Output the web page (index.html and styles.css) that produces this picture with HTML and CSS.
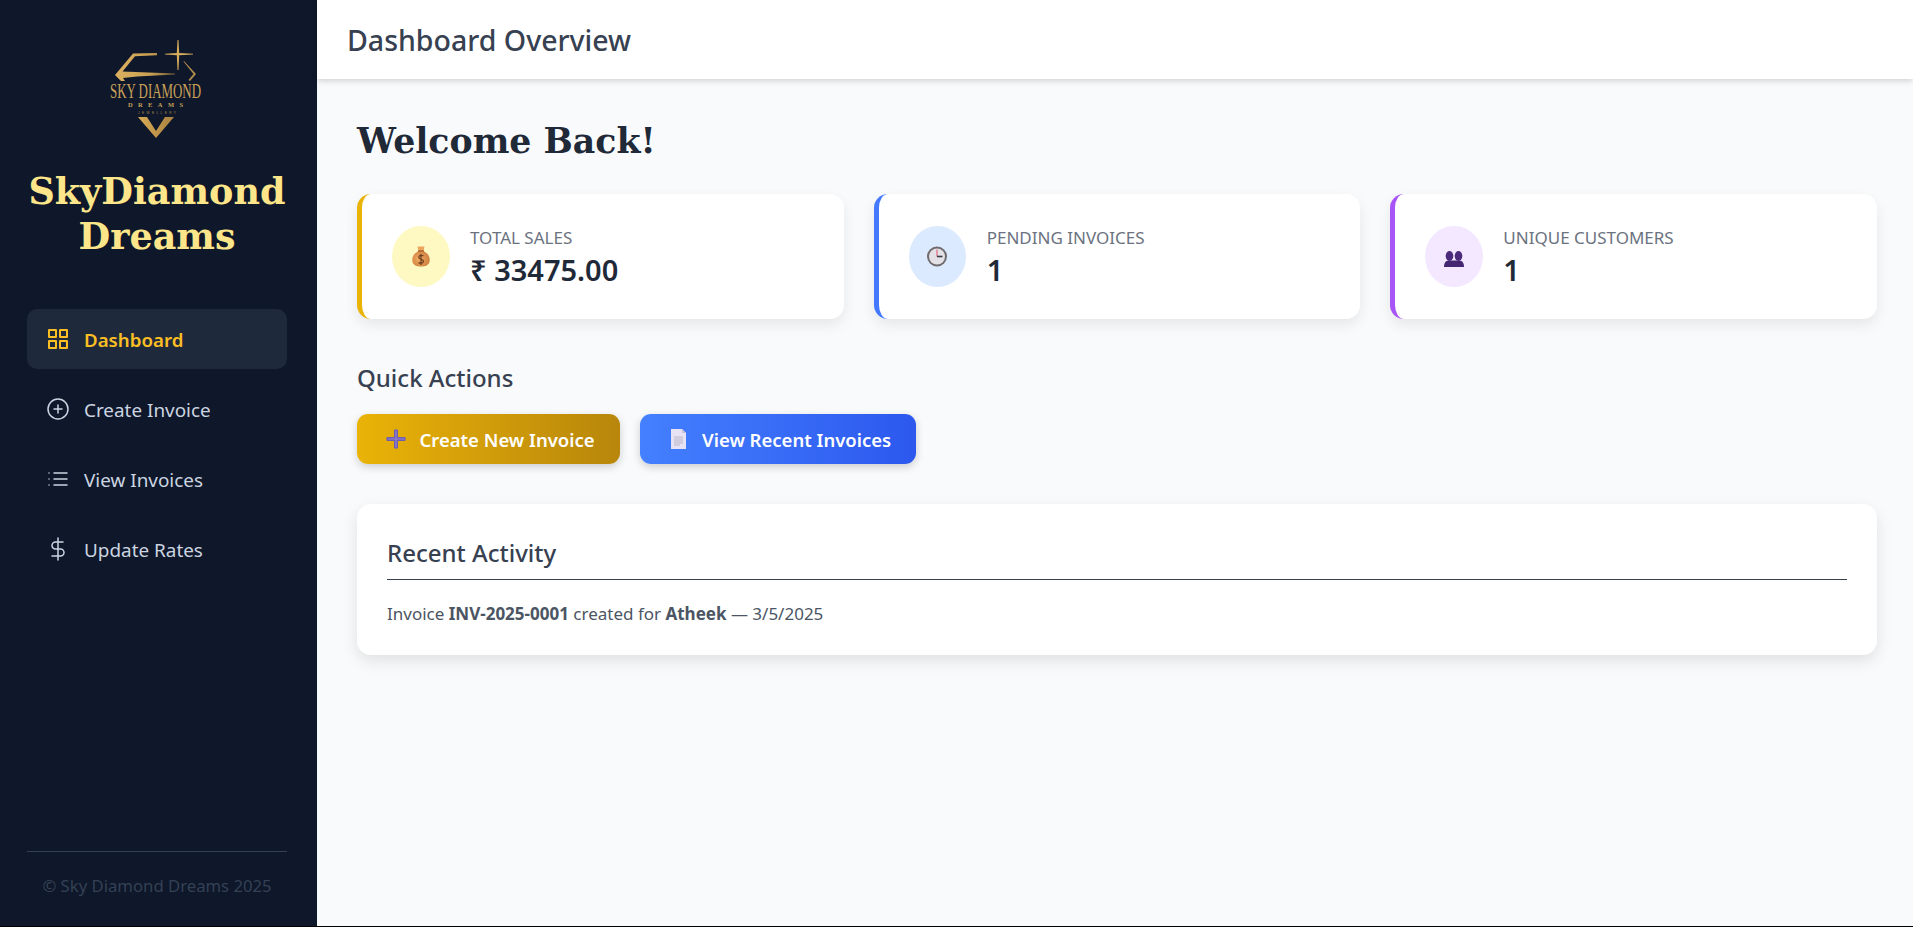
FILE: index.html
```html
<!DOCTYPE html>
<html lang="en">
<head>
<meta charset="utf-8">
<title>Dashboard Overview</title>
<link rel="stylesheet" href="styles.css">
</head>
<body>
<div class="app">
  <aside class="sidebar">
    <div class="brand">
      <svg class="logo" viewBox="0 0 100 100" width="100" height="100">
        <defs>
          <linearGradient id="g1" x1="0" x2="1" y1="0" y2="0"><stop offset="0" stop-color="#d8ab55"/><stop offset="1" stop-color="#a8813f"/></linearGradient>
          <linearGradient id="g2" x1="0" x2="1" y1="0" y2="0"><stop offset="0" stop-color="#dcb060"/><stop offset=".6" stop-color="#c9a052"/><stop offset="1" stop-color="#6f5a35"/></linearGradient>
        </defs>
        <path d="M8 35 L26 13.500 L50 13 L50 15.200 L28 16.200 L15.500 31.500 L68 33.400 L68 34.600 L30 36.500 L16 38 L18 41 L14 41Z" fill="url(#g2)"/>
        <path d="M70.500 0 H71.500 L72.200 13 L86 13.800 V14.400 L72.200 15.200 L71.500 30 H70.500 L69.800 15.200 L58 14.400 V13.800 L69.800 13Z" fill="#d5ab5c"/>
        <path d="M77 21 L89 34 L83 41 L81.500 40 L86.500 34 L76.500 21.500Z" fill="#b38e4c"/>
        <text class="logo-a" x="48.500" y="58" textLength="91" lengthAdjust="spacingAndGlyphs" text-anchor="middle">SKY DIAMOND</text>
        <text class="logo-b" x="48.500" y="67" textLength="55" text-anchor="middle">DREAMS</text>
        <text class="logo-c" x="50" y="74" textLength="38" text-anchor="middle">JEWELLERY</text>
        <path d="M31 77 L40 77 L49 91 L58 77 L67 77 L49 98Z" fill="url(#g1)"/>
      </svg>
      <h1 class="brand-name">SkyDiamond Dreams</h1>
    </div>
    <nav class="nav">
      <a class="nav-item active">
        <svg class="nav-icon" viewBox="0 0 24 24"><rect x="3" y="3" width="7" height="7"/><rect x="14" y="3" width="7" height="7"/><rect x="14" y="14" width="7" height="7"/><rect x="3" y="14" width="7" height="7"/></svg>
        <span>Dashboard</span>
      </a>
      <a class="nav-item">
        <svg class="nav-icon thin" viewBox="0 0 24 24"><circle cx="12" cy="12" r="10"/><path d="M12 8v8M8 12h8"/></svg>
        <span class="nav-label">Create Invoice</span>
      </a>
      <a class="nav-item">
        <svg class="nav-icon thin" viewBox="0 0 24 24"><path d="M8 6h13M8 12h13M8 18h13M3 6h.01M3 12h.01M3 18h.01"/></svg>
        <span class="nav-label">View Invoices</span>
      </a>
      <a class="nav-item">
        <svg class="nav-icon thin" viewBox="0 0 24 24"><path d="M12 1v22M17 5H9.500a3.500 3.500 0 0 0 0 7h5a3.500 3.500 0 0 1 0 7H6"/></svg>
        <span class="nav-label">Update Rates</span>
      </a>
    </nav>
    <footer class="side-foot">© Sky Diamond Dreams 2025</footer>
  </aside>
  <div class="content">
    <header class="topbar"><h2 class="topbar-title">Dashboard Overview</h2></header>
    <main class="main">
      <h2 class="welcome">Welcome Back!</h2>
      <section class="stats">
        <div class="stat stat-gold">
          <div class="stat-icon">
            <svg viewBox="0 0 18 21" width="18" height="21">
              <defs><radialGradient id="bag" cx=".4" cy=".5" r=".7"><stop offset="0" stop-color="#f0aa62"/><stop offset="1" stop-color="#c97a3a"/></radialGradient></defs>
              <path d="M5.500 0.500 L12.500 0.500 L11.500 5 L6.500 5Z" fill="#eda45c"/>
              <path d="M6.500 5 C2 7.500 0 10.500 0.300 14.500 C0.600 19.500 5 20.500 9 20.500 C13 20.500 17.400 19.500 17.700 14.500 C18 10.500 16 7.500 11.500 5Z" fill="url(#bag)"/>
              <rect x="6" y="4.300" width="6" height="1.300" fill="#a85f28"/>
              <path d="M11.500 9.800 C9.500 8.800 6.800 9.300 6.800 11.300 C6.800 13.800 11.500 12.800 11.500 15.300 C11.500 17.300 8.500 17.600 6.500 16.600 M9 8v11" fill="none" stroke="#6b3f22" stroke-width="1.200"/>
            </svg>
          </div>
          <div class="stat-body"><div class="stat-label">TOTAL SALES</div><div class="stat-value">₹ 33475.00</div></div>
        </div>
        <div class="stat stat-blue">
          <div class="stat-icon">
            <svg viewBox="0 0 20 21" width="20" height="21">
              <circle cx="10" cy="10.500" r="10" fill="#6f6b6e"/>
              <circle cx="10" cy="10.500" r="8" fill="#e3e1e6"/>
              <path d="M10 3.500v7" stroke="#e2506b" stroke-width="1"/>
              <path d="M10 10.500h5.500" stroke="#3a3a45" stroke-width="1.600"/>
            </svg>
          </div>
          <div class="stat-body"><div class="stat-label">PENDING INVOICES</div><div class="stat-value">1</div></div>
        </div>
        <div class="stat stat-purple">
          <div class="stat-icon">
            <svg class="people" viewBox="0 0 20 16" width="20" height="16">
              <ellipse cx="5.500" cy="5" rx="3.800" ry="5" fill="#4b2a7c"/>
              <ellipse cx="14.500" cy="5" rx="3.800" ry="5" fill="#4b2a7c"/>
              <path d="M0 16 C0 11.500 2 9.500 5 9.500 L15 9.500 C18 9.500 20 11.500 20 16Z" fill="#452672"/>
            </svg>
          </div>
          <div class="stat-body"><div class="stat-label">UNIQUE CUSTOMERS</div><div class="stat-value">1</div></div>
        </div>
      </section>
      <h3 class="section-title">Quick Actions</h3>
      <div class="actions">
        <a class="btn btn-gold">
          <span class="btn-icon"><svg viewBox="0 0 20 20" width="20" height="20"><path d="M8 1 Q10 -.5 12 1 V8 H19 Q20.500 10 19 12 H12 V19 Q10 20.500 8 19 V12 H1 Q-.5 10 1 8 H8Z" fill="#6f5db0"/><path d="M10 1.500v17M1.500 10h17" stroke="#9484d4" stroke-width="1.200"/></svg></span>
          <span>Create New Invoice</span>
        </a>
        <a class="btn btn-blue">
          <span class="btn-icon"><svg viewBox="0 0 15 20" width="15" height="20"><path d="M0 0h11l4 4v16H0z" fill="#e8e3f4"/><path d="M11 0l4 4h-4z" fill="#c9c2dc"/><path d="M3 8h9M3 10h9M3 12h9M3 14h9M3 16h6" stroke="#b0a8c4" stroke-width=".8"/></svg></span>
          <span>View Recent Invoices</span>
        </a>
      </div>
      <section class="activity">
        <h3 class="activity-title">Recent Activity</h3>
        <p class="activity-row">Invoice <strong>INV-2025-0001</strong> created for <strong>Atheek</strong> — 3/5/2025</p>
      </section>
    </main>
  </div>
</div>
</body>
</html>
```

FILE: styles.css
```css
* { box-sizing: border-box; }
html { background: #000; height: 100%; }
body { margin: 0; font-family: "Noto Sans", "Open Sans", sans-serif; }
h1, h2, h3, p { margin: 0; }

.app { display: flex; height: 926px; overflow: hidden; background: #f9fafb; }

.sidebar { width: 317px; flex: none; background: #0f172a; padding: 40px 30px 0 27px; display: flex; flex-direction: column; }
.brand { display: flex; flex-direction: column; align-items: center; }
.logo { display: block; overflow: visible; }
.logo-a { font-family: "Liberation Serif", serif; font-size: 20px; fill: #c9a25a; }
.logo-b { font-family: "Liberation Serif", serif; font-size: 6.500px; font-weight: 700; fill: #c4a059; }
.logo-c { font-family: "Liberation Sans", sans-serif; font-size: 3.200px; fill: #b09050; }
.brand-name { margin-top: 29px; font-family: "DejaVu Serif", serif; font-weight: 700; font-size: 36.500px; line-height: 45px; color: #fde68a; text-align: center; }

.nav { margin-top: 50px; display: flex; flex-direction: column; gap: 10px; }
.nav-item { height: 60px; display: flex; align-items: center; gap: 14px; padding-left: 19px; border-radius: 10px; color: #cbd5e1; font-size: 18.900px; }
.nav-item.active { background: #1e293b; color: #fbbf24; font-weight: 600; font-size: 18.700px; }
.nav-label { padding-top: 2px; }
.nav-icon { width: 24px; height: 24px; fill: none; stroke: currentColor; stroke-width: 2; stroke-linecap: round; stroke-linejoin: round; flex: none; }
.nav-icon.thin { stroke-width: 1.500; }

.side-foot { margin-top: auto; margin-bottom: 29px; border-top: 1px solid #334155; padding-top: 23px; text-align: center; color: #334155; font-size: 16.700px; line-height: 22px; }

.content { flex: 1; min-width: 0; display: flex; flex-direction: column; }
.topbar { height: 79px; flex: none; background: #fff; padding: 0 30px; display: flex; align-items: center; box-shadow: 0 2px 6px rgba(0,0,0,.16); position: relative; }
.topbar-title { font-size: 28.500px; font-weight: 500; color: #374151; }

.main { padding: 37px 36px 0 40px; }
.welcome { font-family: "DejaVu Serif", serif; font-weight: 700; font-size: 34.700px; line-height: 50px; color: #1f2937; }

.stats { margin-top: 28px; display: grid; grid-template-columns: repeat(3, 1fr); gap: 30px; }
.stat { height: 125px; background: #fff; border-radius: 14px; border-left: 5px solid; padding: 0 29px 0 30px; display: flex; align-items: center; gap: 20.500px; box-shadow: 0 6px 14px rgba(0,0,0,.08); }
.stat-gold { border-color: #eab308; }
.stat-blue { border-color: #4479ff; }
.stat-purple { border-color: #a855f7; }
.stat-icon { width: 57.500px; height: 61px; border-radius: 50%; flex: none; display: flex; align-items: center; justify-content: center; }
.stat-icon svg { display: block; }
.people { margin-top: 4px; }
.stat-gold .stat-icon { background: #fef9c3; }
.stat-blue .stat-icon { background: #dbeafe; }
.stat-purple .stat-icon { background: #f3e8ff; }
.stat-body { padding-top: 2px; }
.stat-label { font-size: 17px; line-height: 25px; color: #6b7280; }
.stat-value { font-size: 29px; line-height: 40px; font-weight: 600; color: #1f2937; }

.section-title { margin-top: 42px; font-size: 24px; line-height: 34px; font-weight: 500; color: #374151; }
.actions { margin-top: 19px; display: flex; gap: 20px; }
.btn { height: 50px; padding: 0 25px 0 27px; border-radius: 11px; display: flex; align-items: center; gap: 11.500px; color: #fff; font-size: 18.500px; font-weight: 600; box-shadow: 0 3px 8px rgba(0,0,0,.18); }
.btn-gold { background: linear-gradient(90deg, #eab308, #b8860b); }
.btn-blue { background: linear-gradient(90deg, #4480ff, #2c58ee); }
.btn-icon { flex: none; width: 24px; display: flex; justify-content: center; }

.activity { margin-top: 40px; background: #fff; border-radius: 14px; padding: 31px 30px 29px; box-shadow: 0 6px 16px rgba(0,0,0,.1); }
.activity-title { font-size: 24px; line-height: 36px; font-weight: 500; color: #374151; padding-bottom: 8px; border-bottom: 1px solid #374151; }
.activity-row { margin-top: 22px; font-size: 17px; line-height: 24px; color: #4b5563; }
```
